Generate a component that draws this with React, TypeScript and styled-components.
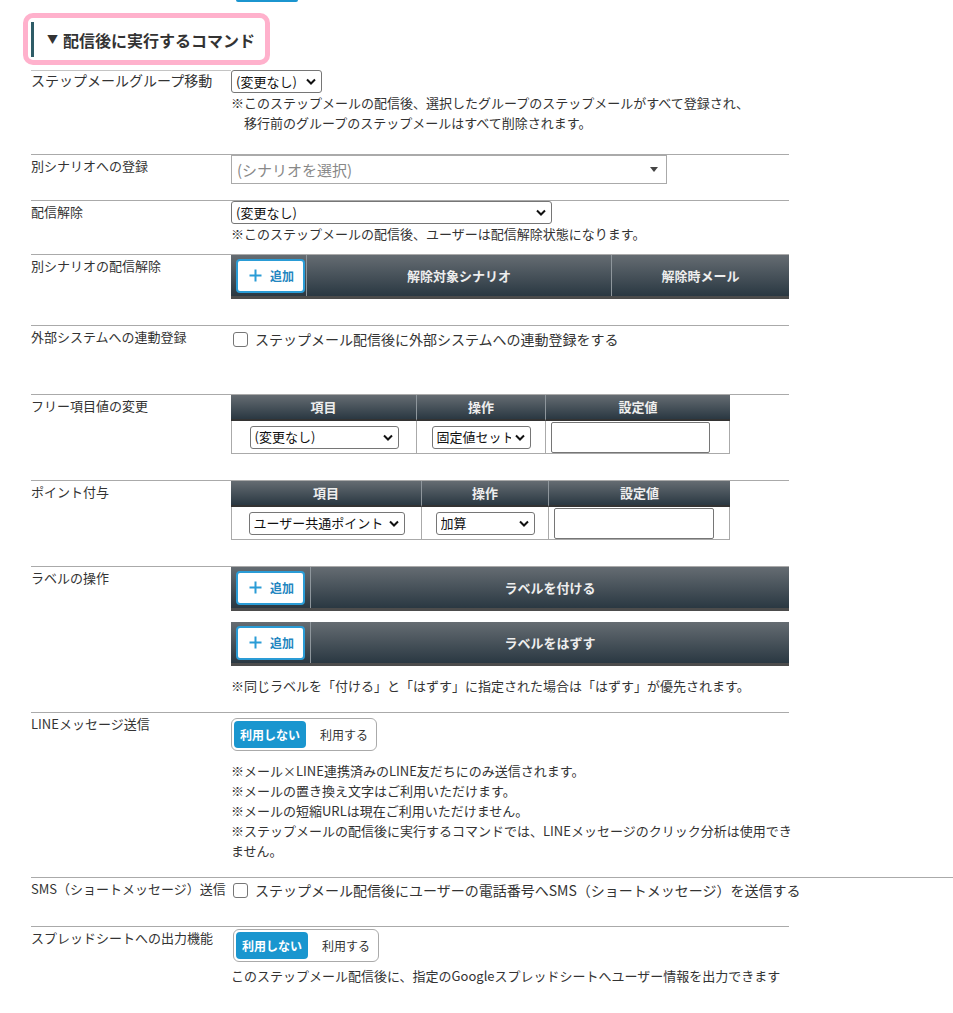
import React from 'react';
import styled, { createGlobalStyle } from 'styled-components';

const Global = createGlobalStyle`
  html, body { margin: 0; padding: 0; background: #fff; }
  body { font-family: "Noto Sans CJK JP", "Noto Sans", sans-serif; color: #333; }
`;

const Page = styled.div`
  padding: 0 0 40px 31px;
  font-size: 13px;
  line-height: 20px;
`;

const TopStub = styled.div`
  margin-left: 205px;
  width: 62px;
  height: 2px;
  background: #1b95cf;
  border-radius: 0 0 3px 3px;
`;

const TitleFrame = styled.div`
  display: flex;
  width: fit-content;
  margin: 11px 0 5px -8px;
  border: 5px solid #ffb1cc;
  border-radius: 10px;
  padding: 4px 10px 3px 3px;
`;

const TitleBar = styled.h2`
  margin: 0;
  display: flex;
  align-items: center;
  gap: 5px;
  height: 35px;
  padding-left: 13px;
  border-left: 3px solid #2e5c67;
  font-size: 16px;
  font-weight: bold;
  color: #333;
  line-height: 1;
`;

const TitleArrow = styled.span`
  font-size: 11px;
  color: #333;
`;

type RuleKind = 'full' | 'label' | 'wide';

const Row = styled.div<{ $h: number; $rule?: RuleKind }>`
  display: grid;
  grid-template-columns: 200px 1fr;
  box-sizing: border-box;
  min-height: ${(p) => p.$h}px;
  width: ${(p) => (p.$rule === 'wide' ? 922 : 758)}px;
  border-top: ${(p) => (p.$rule === 'label' ? 'none' : '1px solid #aaa')};
`;

const Label = styled.div<{ $fs?: number; $rule?: boolean }>`
  font-size: ${(p) => p.$fs ?? 13}px;
  line-height: 18px;
  padding-top: ${(p) => (p.$rule ? 0 : 2)}px;
  color: #333;
  white-space: nowrap;
  align-self: start;
  ${(p) => (p.$rule ? 'border-top: 1px solid #c4c4c4;' : '')}
`;

const Cell = styled.div<{ $pt?: number }>`
  padding-top: ${(p) => p.$pt ?? 0}px;
  min-width: 0;
`;

const Note = styled.p<{ $mt?: number }>`
  margin: ${(p) => p.$mt ?? 0}px 0 0;
  font-size: 13px;
  line-height: 20px;
  color: #333;
  white-space: nowrap;
`;

const Indent = styled.span`
  display: inline-block;
  width: 13px;
`;

const SelectBox = styled.div<{ $w: number; $h?: number }>`
  display: inline-flex;
  align-items: center;
  gap: 4px;
  box-sizing: border-box;
  width: ${(p) => p.$w}px;
  height: ${(p) => p.$h ?? 23}px;
  border: 1px solid #767676;
  border-radius: 3px;
  background: #fff;
  padding: 0 5px 0 4px;
  font-size: 13px;
  color: #111;
  vertical-align: middle;
`;

const SelectText = styled.span`
  flex: 1;
  min-width: 0;
  overflow: hidden;
  white-space: nowrap;
  text-align: left;
  line-height: 20px;
`;

const ComboBox = styled.div`
  display: flex;
  align-items: center;
  justify-content: space-between;
  box-sizing: border-box;
  width: 436px;
  height: 29px;
  border: 1px solid #aaa;
  padding: 0 8px 0 5px;
  font-size: 15px;
  color: #888;
  background: #fff;
`;

const ComboArrow = styled.span`
  width: 0;
  height: 0;
  border-left: 4px solid transparent;
  border-right: 4px solid transparent;
  border-top: 5px solid #444;
`;

const DarkBar = styled.div<{ $cols: string }>`
  display: grid;
  grid-template-columns: ${(p) => p.$cols};
  box-sizing: border-box;
  height: 44px;
  background: linear-gradient(#656c72, #2a3842);
  border-bottom: 3px solid #4c4c4c;
`;

const DarkCell = styled.div<{ $start?: boolean }>`
  display: flex;
  align-items: center;
  justify-content: ${(p) => (p.$start ? 'flex-start' : 'center')};
  padding-left: ${(p) => (p.$start ? 5 : 0)}px;
  color: #eee;
  font-weight: bold;
  font-size: 13px;
  border-left: 1px solid #8e969c;
  &:first-child {
    border-left: none;
  }
`;

const AddButton = styled.button`
  box-sizing: border-box;
  display: flex;
  align-items: center;
  justify-content: center;
  gap: 8px;
  width: 69px;
  height: 34px;
  padding: 0 0 0 2px;
  background: #fff;
  border: 2px solid #2a9cd6;
  border-radius: 4px;
  color: #2386c0;
  font-family: inherit;
  font-size: 12px;
  font-weight: bold;
`;

const StackGap = styled.div`
  height: 11px;
`;

const CheckLine = styled.label`
  display: flex;
  align-items: center;
  gap: 7px;
  padding-left: 2px;
  font-size: 14px;
  line-height: 20px;
  color: #333;
  white-space: nowrap;
`;

const CheckBox = styled.span`
  flex: none;
  width: 13px;
  height: 13px;
  border: 1px solid #767676;
  border-radius: 3px;
  background: #fff;
`;

const FieldGrid = styled.div<{ $cols: string }>`
  display: grid;
  grid-template-columns: ${(p) => p.$cols};
  width: 499px;
`;

const HeadCell = styled.div`
  display: flex;
  align-items: center;
  justify-content: center;
  box-sizing: border-box;
  height: 26px;
  background: linear-gradient(#656c72, #2a3842);
  border-left: 1px solid #8e969c;
  border-bottom: 2px solid #333;
  color: #eee;
  font-size: 13px;
  font-weight: bold;
  &:first-child {
    border-left: none;
  }
`;

const BodyCell = styled.div<{ $start?: boolean; $last?: boolean }>`
  display: flex;
  align-items: center;
  justify-content: ${(p) => (p.$start ? 'flex-start' : 'center')};
  padding-left: ${(p) => (p.$start ? 5 : 0)}px;
  box-sizing: border-box;
  height: 33px;
  border-left: 1px solid #aaa;
  border-bottom: 1px solid #aaa;
  ${(p) => (p.$last ? 'border-right: 1px solid #aaa;' : '')}
`;

const TextInput = styled.input<{ $w: number; $h: number }>`
  box-sizing: border-box;
  width: ${(p) => p.$w}px;
  height: ${(p) => p.$h}px;
  border: 1px solid #767676;
  border-radius: 2px;
  background: #fff;
  padding: 0 4px;
  font-family: inherit;
`;

const Toggle = styled.div<{ $mt: number; $ml?: number }>`
  display: flex;
  align-items: center;
  width: fit-content;
  margin: ${(p) => p.$mt}px 0 0 ${(p) => p.$ml ?? 0}px;
  padding: 2px;
  border: 1px solid #aaa;
  border-radius: 6px;
  background: #fff;
`;

const ToggleOn = styled.span`
  display: flex;
  align-items: center;
  height: 27px;
  padding: 0 6px;
  border-radius: 4px;
  background: #1a96cf;
  color: #fff;
  font-size: 12px;
  font-weight: bold;
`;

const ToggleOff = styled.span`
  padding: 0 6px 0 14px;
  font-size: 12px;
  color: #333;
`;

const Chevron = () => (
  <svg width="10" height="7" viewBox="0 0 10 7" aria-hidden="true" style={{ flex: 'none' }}>
    <polyline points="1,1.5 5,5.5 9,1.5" fill="none" stroke="#111" strokeWidth="2" />
  </svg>
);

const PlusIcon = () => (
  <svg width="13" height="13" viewBox="0 0 13 13" aria-hidden="true">
    <path d="M6.5 0.5v12M0.5 6.5h12" stroke="#2a9cd6" strokeWidth="2" fill="none" />
  </svg>
);

const Select = ({ w, h, text }: { w: number; h?: number; text: string }) => (
  <SelectBox $w={w} $h={h}>
    <SelectText>{text}</SelectText>
    <Chevron />
  </SelectBox>
);

const Add = () => (
  <AddButton type="button">
    <PlusIcon />
    追加
  </AddButton>
);

const ToggleSwitch = ({ mt, ml }: { mt: number; ml?: number }) => (
  <Toggle $mt={mt} $ml={ml}>
    <ToggleOn>利用しない</ToggleOn>
    <ToggleOff>利用する</ToggleOff>
  </Toggle>
);

export default function App() {
  return (
    <>
      <Global />
      <Page>
        <TopStub />
        <TitleFrame>
          <TitleBar>
            <TitleArrow>▼</TitleArrow>
            配信後に実行するコマンド
          </TitleBar>
        </TitleFrame>

        <Row $h={84} $rule="label">
          <Label $fs={14} $rule>ステップメールグループ移動</Label>
          <Cell>
            <Select w={91} text="(変更なし)" />
            <Note>
              ※このステップメールの配信後、選択したグループのステップメールがすべて登録され、
              <br />
              <Indent />
              移行前のグループのステップメールはすべて削除されます。
            </Note>
          </Cell>
        </Row>

        <Row $h={46}>
          <Label>別シナリオへの登録</Label>
          <Cell>
            <ComboBox>
              <span>(シナリオを選択)</span>
              <ComboArrow />
            </ComboBox>
          </Cell>
        </Row>

        <Row $h={54}>
          <Label>配信解除</Label>
          <Cell>
            <Select w={321} text="(変更なし)" />
            <Note>※このステップメールの配信後、ユーザーは配信解除状態になります。</Note>
          </Cell>
        </Row>

        <Row $h={71}>
          <Label>別シナリオの配信解除</Label>
          <Cell>
            <DarkBar $cols="75px 305px 1fr">
              <DarkCell $start>
                <Add />
              </DarkCell>
              <DarkCell>解除対象シナリオ</DarkCell>
              <DarkCell>解除時メール</DarkCell>
            </DarkBar>
          </Cell>
        </Row>

        <Row $h={69}>
          <Label>外部システムへの連動登録</Label>
          <Cell $pt={3}>
            <CheckLine>
              <CheckBox />
              ステップメール配信後に外部システムへの連動登録をする
            </CheckLine>
          </Cell>
        </Row>

        <Row $h={86}>
          <Label>フリー項目値の変更</Label>
          <Cell>
            <FieldGrid $cols="185px 129px 185px">
              <HeadCell>項目</HeadCell>
              <HeadCell>操作</HeadCell>
              <HeadCell>設定値</HeadCell>
              <BodyCell>
                <Select w={149} text="(変更なし)" />
              </BodyCell>
              <BodyCell>
                <Select w={99} text="固定値セット" />
              </BodyCell>
              <BodyCell $start $last>
                <TextInput $w={159} $h={31} readOnly />
              </BodyCell>
            </FieldGrid>
          </Cell>
        </Row>

        <Row $h={86}>
          <Label>ポイント付与</Label>
          <Cell>
            <FieldGrid $cols="190px 127px 182px">
              <HeadCell>項目</HeadCell>
              <HeadCell>操作</HeadCell>
              <HeadCell>設定値</HeadCell>
              <BodyCell>
                <Select w={156} text="ユーザー共通ポイント" />
              </BodyCell>
              <BodyCell>
                <Select w={99} text="加算" />
              </BodyCell>
              <BodyCell $start $last>
                <TextInput $w={160} $h={31} readOnly />
              </BodyCell>
            </FieldGrid>
          </Cell>
        </Row>

        <Row $h={146}>
          <Label>ラベルの操作</Label>
          <Cell>
            <DarkBar $cols="79px 1fr">
              <DarkCell $start>
                <Add />
              </DarkCell>
              <DarkCell>ラベルを付ける</DarkCell>
            </DarkBar>
            <StackGap />
            <DarkBar $cols="79px 1fr">
              <DarkCell $start>
                <Add />
              </DarkCell>
              <DarkCell>ラベルをはずす</DarkCell>
            </DarkBar>
            <Note $mt={10}>※同じラベルを「付ける」と「はずす」に指定された場合は「はずす」が優先されます。</Note>
          </Cell>
        </Row>

        <Row $h={165}>
          <Label>LINEメッセージ送信</Label>
          <Cell>
            <ToggleSwitch mt={5} />
            <Note $mt={10}>
              ※メール×LINE連携済みのLINE友だちにのみ送信されます。
              <br />
              ※メールの置き換え文字はご利用いただけます。
              <br />
              ※メールの短縮URLは現在ご利用いただけません。
              <br />
              ※ステップメールの配信後に実行するコマンドでは、LINEメッセージのクリック分析は使用でき
              <br />
              ません。
            </Note>
          </Cell>
        </Row>

        <Row $h={49} $rule="wide">
          <Label>SMS（ショートメッセージ）送信</Label>
          <Cell $pt={2}>
            <CheckLine>
              <CheckBox />
              ステップメール配信後にユーザーの電話番号へSMS（ショートメッセージ）を送信する
            </CheckLine>
          </Cell>
        </Row>

        <Row $h={80}>
          <Label>スプレッドシートへの出力機能</Label>
          <Cell>
            <ToggleSwitch mt={2} ml={2} />
            <Note $mt={4}>このステップメール配信後に、指定のGoogleスプレッドシートへユーザー情報を出力できます</Note>
          </Cell>
        </Row>
      </Page>
    </>
  );
}
